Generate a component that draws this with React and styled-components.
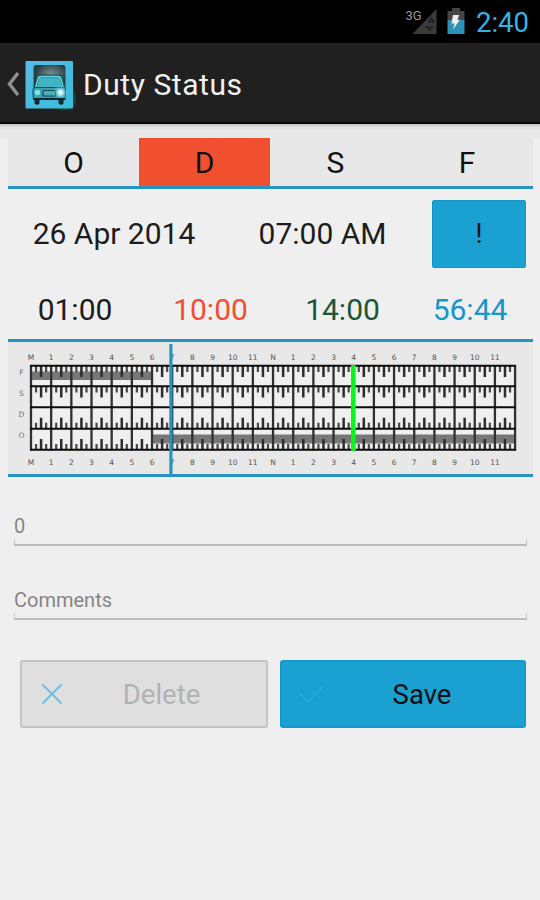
import React from "react";
import styled, { createGlobalStyle } from "styled-components";

const GlobalStyle = createGlobalStyle`
  * { box-sizing: border-box; }
  body { margin: 0; background: #efefef; font-family: Roboto, sans-serif; }
  button { font-family: inherit; }
`;

const Screen = styled.div`
  width: 540px;
  height: 900px;
  background: #efefef;
  display: flex;
  flex-direction: column;
  overflow: hidden;
`;

const StatusBar = styled.header`
  height: 43px;
  flex: none;
  background: #000;
  display: flex;
  justify-content: flex-end;
  align-items: center;
  padding-right: 11px;
`;

const StatusIcons = styled.svg`
  width: 66px;
  height: 43px;
  margin-right: 5px;
`;

const Clock = styled.span`
  width: 53px;
  font-size: 27.5px;
  line-height: 46px;
  height: 43px;
  color: #35b4e4;
  white-space: nowrap;
`;

const ActionBar = styled.div`
  height: 81px;
  flex: none;
  background: #202020;
  border-bottom: 2px solid #080808;
  display: flex;
  align-items: center;
  padding: 3px 0 0 7px;
`;

const BackIcon = styled.svg`
  width: 13px;
  height: 26px;
  margin-right: 2px;
`;

const AppIcon = styled.svg`
  width: 54px;
  height: 54px;
`;

const Title = styled.h1`
  margin: 0 0 0 7px;
  font-size: 30px;
  font-weight: 400;
  letter-spacing: 0.55px;
  color: #f0f0f0;
  white-space: nowrap;
`;

const TopStrip = styled.div`
  height: 14px;
  flex: none;
  background: linear-gradient(#bcbcbc, #e2e2e2 3px, #e8e8e8 6px);
`;

const Panel = styled.main`
  margin: 0 7px 0 8px;
  display: flex;
  flex-direction: column;
`;

const Tabs = styled.nav`
  display: grid;
  grid-template-columns: 131px 131px 131px 1fr;
  height: 51px;
  background: #e8e8e8;
  border-bottom: 3px solid #2793c1;
`;

const Tab = styled.button`
  border: 0;
  padding: 1px 0 0;
  font-size: 30px;
  color: #111;
  background: ${(p) => (p.$active ? "#f05030" : "transparent")};
`;

const DateRow = styled.div`
  height: 89px;
  display: grid;
  grid-template-columns: 212px 205px 94px;
  align-items: center;
  font-size: 30px;
`;

const Value = styled.span`
  text-align: center;
  white-space: nowrap;
  color: ${(p) => p.$color || "#1c1c1c"};
`;

const AlertButton = styled.button`
  height: 68px;
  margin-left: 7px;
  width: 94px;
  border: 1px solid #1396c6;
  border-radius: 2px;
  background: #1aa0d1;
  color: #111;
  font-size: 27px;
  padding: 0;
`;

const Totals = styled.div`
  height: 61px;
  display: grid;
  grid-template-columns: 134px 137px 127px 128px;
  align-items: center;
  font-size: 30px;
  padding-top: 1px;
`;

const ChartFrame = styled.section`
  height: 138px;
  border-top: 3px solid #2793c1;
  border-bottom: 3px solid #2793c1;
  background: #e8e8e8;
`;

const ChartSvg = styled.svg`
  display: block;
  width: 525px;
  height: 132px;
`;

const Fields = styled.div`
  padding: 25px 6px 0;
  display: flex;
  flex-direction: column;
  gap: 22px;
`;

const Field = styled.div`
  height: 52px;
  position: relative;
  padding-top: 8px;
  line-height: 32px;
  font-size: 20px;
  color: #858585;
`;

const FieldLine = styled.span`
  position: absolute;
  left: 0;
  right: 0;
  top: 37px;
  height: 7px;
  border: 1.5px solid #c6c6c6;
  border-bottom: 2px solid #bcbcbc;
  border-top: 0;
`;

const Actions = styled.div`
  display: grid;
  grid-template-columns: 248px 246px;
  gap: 12px;
  padding: 32px 0 0 12px;
`;

const ActionButton = styled.button`
  height: 68px;
  border-radius: 3px;
  display: flex;
  align-items: center;
  padding: 0 0 0 16px;
  font-size: 27.5px;
  border: 2px solid ${(p) => (p.$primary ? "#1598ca" : "#c4c4c4")};
  background: ${(p) => (p.$primary ? "#1aa0d1" : "#dfdfdf")};
  color: ${(p) => (p.$primary ? "#111" : "#b2b2b2")};
`;

const ActionIcon = styled.svg`
  width: 28px;
  height: 28px;
  flex: none;
`;

const ActionLabel = styled.span`
  flex: 1;
  text-align: center;
  padding-right: ${(p) => (p.$primary ? "14px" : "9px")};
  padding-left: ${(p) => (p.$primary ? "8px" : "0")};
`;

const HOURS = ["M", 1, 2, 3, 4, 5, 6, 7, 8, 9, 10, 11, "N", 1, 2, 3, 4, 5, 6, 7, 8, 9, 10, 11];
const STEP = 20.17;
const LEFT = 31;
const ROWS = [365.7, 386.3, 407.3, 428.8, 449.7];
const DUTY_CODES = [["F", 372.5], ["S", 393.5], ["D", 414.5], ["O", 435.5]];

function DutyChart() {
  const ticks = [];
  [[366, 1], [386.5, 1], [428.7, -1], [450, -1]].forEach(([y, dir]) => {
    for (let h = 0; h < 24; h++) {
      [1, 2, 3].forEach((q) => {
        const x = LEFT + h * STEP + (q * STEP) / 4;
        ticks.push(
          <line key={`${y}-${h}-${q}`} x1={x} x2={x} y1={y} y2={y + dir * (q === 2 ? 11 : 6)} stroke={q === 2 ? "#2c2c2c" : "#484848"} strokeWidth={q === 2 ? 2.5 : 2.2} />
        );
      });
    }
  });
  return (
    <ChartSvg viewBox="8 342 525 132">
      <rect x="31" y="366" width="484" height="84" fill="#efefef" />
      <rect x="31" y="371.5" width="121" height="8.500" fill="#777" />
      <rect x="152" y="434.5" width="363" height="9" fill="#777" />
      {ticks}
      {Array.from({ length: 25 }, (_, i) => (
        <line key={i} x1={LEFT + i * STEP} x2={LEFT + i * STEP} y1="365" y2="450.5" stroke="#303030" strokeWidth="2.3" />
      ))}
      {ROWS.map((y) => (
        <line key={y} x1="30" x2="516" y1={y} y2={y} stroke="#0c0c0c" strokeWidth="2" />
      ))}
      <g fontFamily="'DejaVu Sans', sans-serif" fontSize="7.5" fill="#555" textAnchor="middle">
        {HOURS.map((label, i) => (
          <React.Fragment key={i}>
            <text x={LEFT + i * STEP} y="360">{label}</text>
            <text x={LEFT + i * STEP} y="465">{label}</text>
          </React.Fragment>
        ))}
        {DUTY_CODES.map(([label, y]) => (
          <text key={label} x="21.5" y={y + 2.8} fill="#707070">{label}</text>
        ))}
      </g>
      <rect x="169.3" y="344" width="3.2" height="131" fill="#2793c1" />
      <rect x="351" y="365" width="4.6" height="86" rx="1" fill="#0bf51a" />
    </ChartSvg>
  );
}

function TruckIcon() {
  return (
    <AppIcon viewBox="21.5 56.5 54 54">
      <defs>
        <linearGradient id="tile" x1="0" y1="0" x2="1" y2="1">
          <stop offset="0" stopColor="#55bde8" />
          <stop offset="1" stopColor="#3cbbd9" />
        </linearGradient>
        <radialGradient id="cargo" cx=".55" cy=".4">
          <stop offset="0" stopColor="#7b9290" />
          <stop offset="1" stopColor="#293f44" />
        </radialGradient>
        <radialGradient id="lamp">
          <stop offset="0" stopColor="#f0ffff" />
          <stop offset="1" stopColor="#48c4d5" stopOpacity="0" />
        </radialGradient>
        <radialGradient id="glow">
          <stop offset="0" stopColor="#17c4ad" stopOpacity=".7" />
          <stop offset="1" stopColor="#17c4ad" stopOpacity="0" />
        </radialGradient>
      </defs>
      <circle cx="64" cy="98" r="14" fill="url(#glow)" />
      <rect x="25" y="60.5" width="47.5" height="47.5" rx="1" fill="url(#tile)" />
      <path d="M33 88V67q0-2.500 2.500-2.500h27q2.500 0 2.500 2.500v21z" fill="url(#cargo)" />
      <path d="M34.500 88l2.500-10q.5-2.500 3-2.500h18q2.500 0 3 2.500l2.500 10z" fill="#43b3c4" stroke="#1c5158" strokeWidth="3" />
      <path d="M35 88l2.500-10q.5-2 3-2h17q2.500 0 3 2l2.500 10z" fill="none" stroke="#62dceb" strokeWidth="1.3" />
      <rect x="32.500" y="87" width="32.500" height="11.500" rx="2.500" fill="#3a9eab" stroke="#164f58" strokeWidth="1" />
      <rect x="42.500" y="90" width="12.500" height="5.500" rx="1" fill="#4aafba" stroke="#164650" strokeWidth="1.200" />
      <circle cx="37" cy="92" r="2.800" fill="#78e5ef" />
      <circle cx="60" cy="92" r="3" fill="#b4f8f8" />
      <circle cx="60" cy="92" r="8" fill="url(#lamp)" />
      <path d="M32.500 97.5h32.500v2H32.500zM34 99h5v4q-2.5 2.500-5 0zM58 99h5v4q-2.5 2.500-5 0z" fill="#0c2b31" />
    </AppIcon>
  );
}

export default function App() {
  return (
    <>
      <GlobalStyle />
      <Screen>
        <StatusBar>
          <StatusIcons viewBox="405 0 66 43">
            <path d="M436.5 9v25H412.5z" fill="#3b3b3b" />
            <path d="M429 22l2.500-4 2.500 4zM425.500 27h3v3m2-3h3m-3 0v4" fill="none" stroke="#202020" strokeWidth="1.5" />
            <text x="405.5" y="19.5" fontFamily="Roboto, sans-serif" fontSize="13" fill="#999">3G</text>
            <path d="M452 8h8v3h4.5v9h-17v-9h4.5z" fill="#454545" />
            <path d="M447.5 20h17v14h-17z" fill="#2b93b8" />
            <path d="M453 15h6l-1.5 5 2.5-.5-7 10 1.500-6h-3z" fill="#eee" />
          </StatusIcons>
          <Clock>2:40</Clock>
        </StatusBar>
        <ActionBar>
          <BackIcon viewBox="7 71 13 26">
            <path d="M18 73 9.500 84l8.500 11" fill="none" stroke="#909090" strokeWidth="3.5" />
          </BackIcon>
          <TruckIcon />
          <Title>Duty Status</Title>
        </ActionBar>
        <TopStrip />
        <Panel>
          <Tabs>
            <Tab>O</Tab>
            <Tab $active>D</Tab>
            <Tab>S</Tab>
            <Tab>F</Tab>
          </Tabs>
          <DateRow>
            <Value>26 Apr 2014</Value>
            <Value>07:00 AM</Value>
            <AlertButton>!</AlertButton>
          </DateRow>
          <Totals>
            <Value>01:00</Value>
            <Value $color="#f44e30">10:00</Value>
            <Value $color="#1b5637">14:00</Value>
            <Value $color="#1796c8">56:44</Value>
          </Totals>
          <ChartFrame>
            <DutyChart />
          </ChartFrame>
          <Fields>
            <Field>0<FieldLine /></Field>
            <Field>Comments<FieldLine /></Field>
          </Fields>
          <Actions>
            <ActionButton>
              <ActionIcon viewBox="0 0 28 28">
                <path d="M4.5 4.5l19 19m0-19-19 19" stroke="#6cbfe2" strokeWidth="2" />
              </ActionIcon>
              <ActionLabel>Delete</ActionLabel>
            </ActionButton>
            <ActionButton $primary>
              <ActionIcon viewBox="0 0 28 28">
                <path d="M2 14l8 8L25 6" fill="none" stroke="#2ba9d7" strokeWidth="1.5" />
              </ActionIcon>
              <ActionLabel $primary>Save</ActionLabel>
            </ActionButton>
          </Actions>
        </Panel>
      </Screen>
    </>
  );
}
